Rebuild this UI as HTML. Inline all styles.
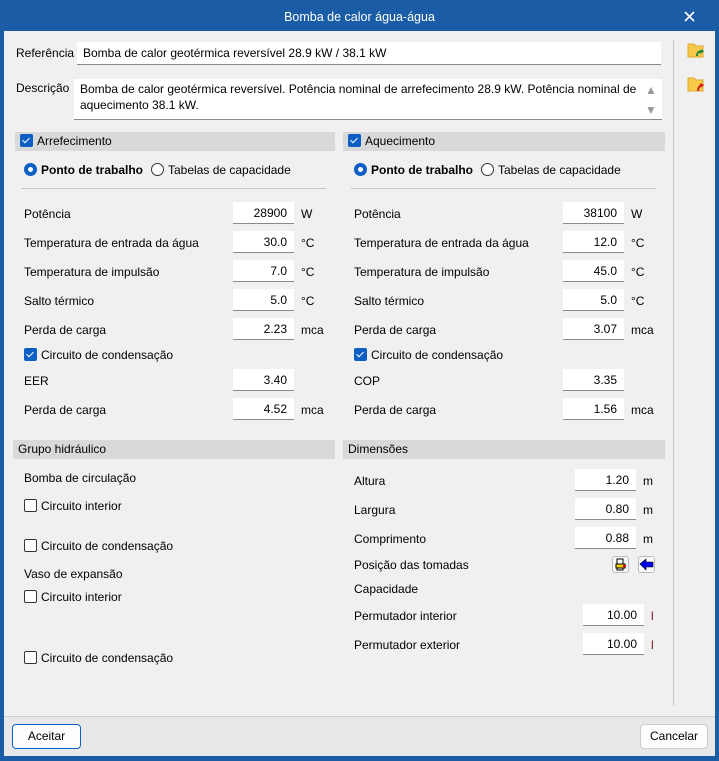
<!DOCTYPE html>
<html><head><meta charset="utf-8"><style>
*{box-sizing:border-box;margin:0;padding:0}
body{width:719px;height:761px;background:#1a5ca6;font-family:"Liberation Sans",sans-serif;font-size:12px;color:#000;position:relative;overflow:hidden}
.win{position:absolute;left:4px;top:31px;width:711px;height:725px;background:#f0f0f0}
.foot{position:absolute;left:4px;top:716px;width:711px;height:40px;background:#e8e8e8;border-top:1px solid #d0d0d0}
.a{position:absolute;white-space:nowrap;line-height:16px}
.in{position:absolute;background:#fff;border-bottom:1px solid #8a8a8a;height:22px;text-align:right;padding:3px 7px 0 0;line-height:16px}
.hd{position:absolute;background:#d9d9d9;height:19px;line-height:19px;padding-left:5px}
.cb{display:inline-block;width:13px;height:13px;border-radius:2px;vertical-align:-2px;margin-right:4px}
.cb.on{background:#0d5fc4;position:relative}
.cb.on:after{content:"";position:absolute;left:4px;top:2px;width:3px;height:6px;border:solid #fff;border-width:0 1.5px 1.5px 0;transform:rotate(45deg)}
.cb.off{border:1px solid #333;background:#fff}
.rd{display:inline-block;width:13px;height:13px;border-radius:50%;vertical-align:-2px;margin-right:4px}
.rd.on{background:#0d5fc4;position:relative}
.rd.on:after{content:"";position:absolute;left:4px;top:4px;width:5px;height:5px;border-radius:50%;background:#fff}
.rd.off{border:1px solid #333;background:#fff}
.btn{position:absolute;height:25px;background:#fdfdfd;border:1px solid #ccc;border-radius:4px;text-align:center;line-height:23px}
</style></head><body>
<div class="a" style="left:0;width:719px;text-align:center;top:9px;color:#fff;font-size:12.5px">Bomba de calor água-água</div>
<svg style="position:absolute;left:684px;top:11px" width="11" height="11"><path d="M1 1L10 10M10 1L1 10" stroke="#fff" stroke-width="1.6"/></svg>
<div class="win"></div>
<div class="foot"></div>

<div class="a" style="left:16px;top:45px">Referência</div>
<div class="in" style="left:77px;top:42px;width:584px;height:23px;text-align:left;padding-left:6px">Bomba de calor geotérmica reversível 28.9 kW / 38.1 kW</div>
<div class="a" style="left:16px;top:80px">Descrição</div>
<div class="in" style="left:74px;top:79px;width:588px;height:41px;text-align:left;padding:2px 0 0 6px;line-height:16px;white-space:normal">Bomba de calor geotérmica reversível. Potência nominal de arrefecimento 28.9 kW. Potência nominal de<br>aquecimento 38.1 kW.</div>
<div class="a" style="left:645px;top:82px;color:#9a9a9a;font-size:12px">▲</div>
<div class="a" style="left:645px;top:102px;color:#9a9a9a;font-size:12px">▼</div>

<div style="position:absolute;left:673px;top:40px;width:1px;height:666px;background:#c8c8c8"></div>
<svg style="position:absolute;left:687px;top:42px" width="18" height="16"><path d="M1 2h6l2 2h7v11H1z" fill="#f6c94a" stroke="#e2a92a"/><path d="M10 14c0-3 2-5 5-5l-1-1M15 9l-2 2" stroke="#1a8a3a" stroke-width="2" fill="none"/></svg>
<svg style="position:absolute;left:687px;top:76px" width="18" height="16"><path d="M1 2h6l2 2h7v11H1z" fill="#f6c94a" stroke="#e2a92a"/><path d="M11 15c0-3 1-5 4-6l-2-1M15 9l-1 2" stroke="#d21f1f" stroke-width="2" fill="none"/></svg>

<div class="hd" style="left:15px;top:132px;width:320px"><span class="cb on"></span>Arrefecimento</div>
<div class="a" style="left:24px;top:162px;font-weight:bold"><span class="rd on"></span>Ponto de trabalho</div>
<div class="a" style="left:151px;top:162px"><span class="rd off"></span>Tabelas de capacidade</div>
<div style="position:absolute;left:21px;top:188px;width:305px;height:1px;background:#c8c8c8"></div>

<div class="a" style="left:24px;top:206px">Potência</div><div class="in" style="left:233px;top:202px;width:61px">28900</div><div class="a" style="left:301px;top:206px">W</div>
<div class="a" style="left:24px;top:235px">Temperatura de entrada da água</div><div class="in" style="left:233px;top:231px;width:61px">30.0</div><div class="a" style="left:301px;top:235px">°C</div>
<div class="a" style="left:24px;top:264px">Temperatura de impulsão</div><div class="in" style="left:233px;top:260px;width:61px">7.0</div><div class="a" style="left:301px;top:264px">°C</div>
<div class="a" style="left:24px;top:293px">Salto térmico</div><div class="in" style="left:233px;top:289px;width:61px">5.0</div><div class="a" style="left:301px;top:293px">°C</div>
<div class="a" style="left:24px;top:322px">Perda de carga</div><div class="in" style="left:233px;top:318px;width:61px">2.23</div><div class="a" style="left:301px;top:322px">mca</div>
<div class="a" style="left:24px;top:347px"><span class="cb on"></span>Circuito de condensação</div>
<div class="a" style="left:24px;top:373px">EER</div><div class="in" style="left:233px;top:369px;width:61px">3.40</div>
<div class="a" style="left:24px;top:402px">Perda de carga</div><div class="in" style="left:233px;top:398px;width:61px">4.52</div><div class="a" style="left:301px;top:402px">mca</div>

<div class="hd" style="left:343px;top:132px;width:322px"><span class="cb on"></span>Aquecimento</div>
<div class="a" style="left:354px;top:162px;font-weight:bold"><span class="rd on"></span>Ponto de trabalho</div>
<div class="a" style="left:481px;top:162px"><span class="rd off"></span>Tabelas de capacidade</div>
<div style="position:absolute;left:351px;top:188px;width:305px;height:1px;background:#c8c8c8"></div>

<div class="a" style="left:354px;top:206px">Potência</div><div class="in" style="left:563px;top:202px;width:61px">38100</div><div class="a" style="left:631px;top:206px">W</div>
<div class="a" style="left:354px;top:235px">Temperatura de entrada da água</div><div class="in" style="left:563px;top:231px;width:61px">12.0</div><div class="a" style="left:631px;top:235px">°C</div>
<div class="a" style="left:354px;top:264px">Temperatura de impulsão</div><div class="in" style="left:563px;top:260px;width:61px">45.0</div><div class="a" style="left:631px;top:264px">°C</div>
<div class="a" style="left:354px;top:293px">Salto térmico</div><div class="in" style="left:563px;top:289px;width:61px">5.0</div><div class="a" style="left:631px;top:293px">°C</div>
<div class="a" style="left:354px;top:322px">Perda de carga</div><div class="in" style="left:563px;top:318px;width:61px">3.07</div><div class="a" style="left:631px;top:322px">mca</div>
<div class="a" style="left:354px;top:347px"><span class="cb on"></span>Circuito de condensação</div>
<div class="a" style="left:354px;top:373px">COP</div><div class="in" style="left:563px;top:369px;width:61px">3.35</div>
<div class="a" style="left:354px;top:402px">Perda de carga</div><div class="in" style="left:563px;top:398px;width:61px">1.56</div><div class="a" style="left:631px;top:402px">mca</div>

<div class="hd" style="left:13px;top:440px;width:322px">Grupo hidráulico</div>
<div class="a" style="left:24px;top:470px">Bomba de circulação</div>
<div class="a" style="left:24px;top:498px"><span class="cb off"></span>Circuito interior</div>
<div class="a" style="left:24px;top:538px"><span class="cb off"></span>Circuito de condensação</div>
<div class="a" style="left:24px;top:566px">Vaso de expansão</div>
<div class="a" style="left:24px;top:589px"><span class="cb off"></span>Circuito interior</div>
<div class="a" style="left:24px;top:650px"><span class="cb off"></span>Circuito de condensação</div>

<div class="hd" style="left:343px;top:440px;width:322px">Dimensões</div>
<div class="a" style="left:354px;top:473px">Altura</div><div class="in" style="left:575px;top:469px;width:61px">1.20</div><div class="a" style="left:643px;top:473px">m</div>
<div class="a" style="left:354px;top:502px">Largura</div><div class="in" style="left:575px;top:498px;width:61px">0.80</div><div class="a" style="left:643px;top:502px">m</div>
<div class="a" style="left:354px;top:531px">Comprimento</div><div class="in" style="left:575px;top:527px;width:61px">0.88</div><div class="a" style="left:643px;top:531px">m</div>
<div class="a" style="left:354px;top:557px">Posição das tomadas</div>
<div style="position:absolute;left:612px;top:556px;width:17px;height:17px;border:1px solid #bbb;border-radius:3px;background:#fafafa"><svg width="15" height="15"><path d="M4 2h6v11H4z" fill="#fff" stroke="#000"/><path d="M3 7h9v4H3z" fill="#f0d000" stroke="#000"/><path d="M10 8h3v2h-3z" fill="#e00"/></svg></div>
<div style="position:absolute;left:638px;top:556px;width:17px;height:17px;border:1px solid #bbb;border-radius:3px;background:#fafafa"><svg width="15" height="15"><path d="M1 7l6-5v3h7v5H7v3z" fill="#0000ee" stroke="#000" stroke-width=".6"/></svg></div>
<div class="a" style="left:354px;top:581px">Capacidade</div>
<div class="a" style="left:354px;top:608px">Permutador interior</div><div class="in" style="left:583px;top:604px;width:61px">10.00</div><div class="a" style="left:651px;top:608px;color:#7a1020">l</div>
<div class="a" style="left:354px;top:637px">Permutador exterior</div><div class="in" style="left:583px;top:633px;width:61px">10.00</div><div class="a" style="left:651px;top:637px;color:#7a1020">l</div>

<div class="btn" style="left:12px;top:724px;width:69px;border-color:#0a64c8">Aceitar</div>
<div class="btn" style="left:640px;top:724px;width:68px">Cancelar</div>
</body></html>
